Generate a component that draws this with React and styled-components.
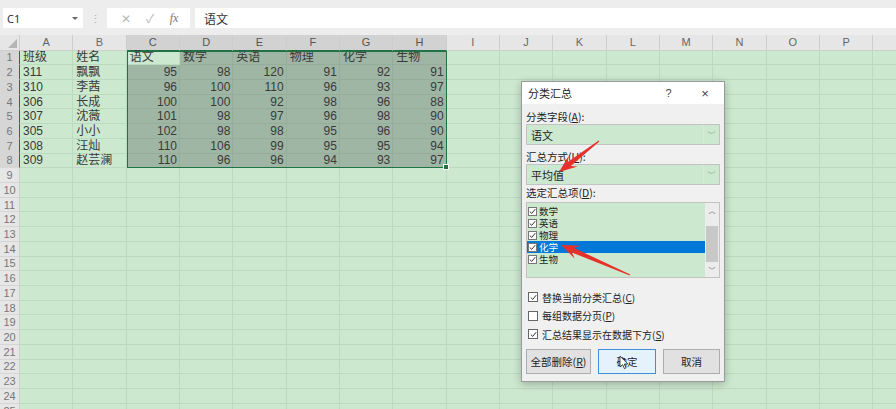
import React from "react";
import styled, { createGlobalStyle } from "styled-components";

const Global = createGlobalStyle`
  html, body { margin: 0; padding: 0; background: #cce8cf; overflow: hidden; }
  body { font-family: "Noto Sans", "Noto Sans CJK SC", sans-serif; }
`;

const Page = styled.div`
  position: relative;
  width: 896px;
  height: 409px;
  overflow: hidden;
  display: flex;
  flex-direction: column;
`;

const TopBar = styled.div`
  height: 35px;
  flex: none;
  background: #ededed;
  display: flex;
  align-items: flex-start;
  padding-top: 8px;
  box-sizing: border-box;
`;

const NameBox = styled.div`
  margin-left: 3px;
  width: 80px;
  height: 20px;
  background: #fff;
  display: flex;
  align-items: center;
  justify-content: space-between;
  padding: 0 5px 0 4px;
  box-sizing: border-box;
  font-size: 11px;
  color: #333;
`;

const Caret = styled.span`
  width: 0; height: 0;
  border-left: 3px solid transparent;
  border-right: 3px solid transparent;
  border-top: 3px solid #666;
`;

const Dots = styled.div`
  width: 24px;
  height: 20px;
  display: flex;
  align-items: center;
  justify-content: center;
  color: #aaa;
  font-size: 11px;
`;

const FxBox = styled.div`
  width: 83px;
  height: 20px;
  background: #fff;
  display: flex;
  align-items: center;
  justify-content: space-around;
  color: #b8b8b8;
  font-size: 12px;
  padding: 0 4px 0 6px;
  box-sizing: border-box;
`;

const Fx = styled.span`
  font-family: "Liberation Serif", serif;
  font-style: italic;
  color: #777;
  font-size: 12px;
`;

const Formula = styled.div`
  margin-left: 5px;
  flex: 1;
  height: 20px;
  background: #fff;
  display: flex;
  align-items: center;
  padding-left: 9px;
  font-size: 12px;
  color: #333;
  font-family: "Noto Sans CJK SC", sans-serif;
`;

const Sheet = styled.div`
  display: grid;
  grid-template-columns: 20px repeat(17, 53.33px);
  grid-template-rows: 15.5px repeat(25, 14.73px);
  background: #cce8cf;
`;

const Corner = styled.div`
  grid-row: 1;
  grid-column: 1;
  background: #e6e6e6;
  border-right: 1px solid #cfcfcf;
  border-bottom: 1px solid #cfcfcf;
  position: relative;
  &::after {
    content: "";
    position: absolute;
    right: 2px;
    bottom: 2px;
    border-left: 9px solid transparent;
    border-bottom: 9px solid #b5b5b5;
  }
`;

const ColHead = styled.div`
  grid-row: 1;
  grid-column: ${p => p.$c + 2};
  background: ${p => (p.$hl ? "#d2d2d2" : "#e6e6e6")};
  border-right: 1px solid #cdcdcd;
  border-bottom: ${p => (p.$hl ? "1.5px solid #217346" : "1px solid #cfcfcf")};
  color: ${p => (p.$hl ? "#555" : "#666")};
  font-size: 11px;
  display: flex;
  align-items: center;
  justify-content: center;
  box-sizing: border-box;
  font-family: "Liberation Sans", sans-serif;
`;

const RowHead = styled.div`
  grid-row: ${p => p.$r + 1};
  grid-column: 1;
  background: ${p => (p.$hl ? "#d6d6d6" : "#e6e6e6")};
  border-right: ${p => (p.$hl ? "1.5px solid #217346" : "1px solid #cfcfcf")};
  border-bottom: 1px solid #d6d6d6;
  color: #777;
  font-size: 11px;
  display: flex;
  align-items: center;
  justify-content: center;
  box-sizing: border-box;
  font-family: "Liberation Sans", sans-serif;
`;

const Cell = styled.div`
  grid-row: ${p => p.$r + 1};
  grid-column: ${p => p.$c + 2};
  background: ${p => (p.$sel ? "#9fb6a4" : "transparent")};
  border-right: 1px solid ${p => (p.$sel ? "#97ad9c" : "#bcdac0")};
  border-bottom: 1px solid ${p => (p.$sel ? "#97ad9c" : "#bcdac0")};
  box-sizing: border-box;
  font-size: 12px;
  color: #3a3a3a;
  display: flex;
  align-items: center;
  justify-content: ${p => (p.$num ? "flex-end" : "flex-start")};
  padding: 0 2px 0 3px;
  white-space: nowrap;
  font-family: "Liberation Sans", "Noto Sans CJK SC", sans-serif;
  line-height: 1;
`;

const SelFrame = styled.div`
  grid-column: 4 / 10;
  grid-row: 2 / 10;
  border: 1.5px solid #217346;
  box-sizing: border-box;
  pointer-events: none;
  position: relative;
  &::after {
    content: "";
    position: absolute;
    right: -3px;
    bottom: -3px;
    width: 4px;
    height: 4px;
    background: #217346;
    border: 1px solid #fff;
  }
`;

const Dialog = styled.div`
  position: absolute;
  left: 521px;
  top: 81px;
  width: 204px;
  height: 301px;
  background: #f0f0f0;
  border: 1px solid #9a9a9a;
  box-shadow: 0 2px 8px rgba(0,0,0,0.25);
  box-sizing: border-box;
  display: flex;
  flex-direction: column;
  font-family: "Noto Sans CJK SC", sans-serif;
  font-size: 10.5px;
  color: #222;
`;

const TitleBar = styled.div`
  height: 22px;
  background: #fff;
  display: flex;
  align-items: center;
  padding: 0 1px 0 6px;
  font-size: 11px;
`;

const TitleText = styled.span`
  flex: 1;
`;

const TitleBtn = styled.span`
  width: ${p => p.$w}px;
  text-align: center;
  color: #444;
  font-family: "Liberation Sans", sans-serif;
  font-size: ${p => p.$fs}px;
`;

const Body = styled.div`
  padding: 6px 4px 0 4px;
  display: flex;
  flex-direction: column;
`;

const Label = styled.div`
  height: 14px;
  line-height: 14px;
  margin-top: ${p => p.$mt || 0}px;
  white-space: nowrap;
`;

const Select = styled.div`
  height: 21px;
  background: #cce8cf;
  border: 1px solid #c3c3c3;
  box-sizing: border-box;
  display: flex;
  align-items: center;
  font-size: 11px;
`;

const SelectText = styled.span`
  flex: 1;
  padding-left: 4px;
`;

const SelectArrow = styled.span`
  width: 15px;
  height: 100%;
  border-left: 1px solid #d8e8da;
  display: flex;
  align-items: center;
  justify-content: center;
  color: #999;
  font-size: 8px;
`;

const List = styled.div`
  margin-top: 2px;
  height: 76px;
  border: 1px solid #c3c3c3;
  background: #cce8cf;
  box-sizing: border-box;
  display: flex;
`;

const Items = styled.div`
  flex: 1;
  padding-top: 2px;
  display: flex;
  flex-direction: column;
`;

const Item = styled.div`
  height: 12px;
  line-height: 11px;
  display: flex;
  align-items: center;
  gap: 2px;
  padding-left: 1px;
  background: ${p => (p.$sel ? "#0078d7" : "transparent")};
  color: ${p => (p.$sel ? "#fff" : "#222")};
  font-size: 9.5px;
`;

const Box = styled.span`
  width: 9px;
  height: 9px;
  border: 1px solid #777;
  background: #fff;
  box-sizing: border-box;
  display: inline-flex;
  align-items: center;
  justify-content: center;
  flex: none;
`;

const Scroll = styled.div`
  width: 14px;
  background: #ececec;
  display: flex;
  flex-direction: column;
  align-items: center;
  justify-content: space-between;
  color: #666;
  font-size: 7px;
  padding: 2px 0;
  box-sizing: border-box;
  position: relative;
`;

const Thumb = styled.div`
  position: absolute;
  left: 1px;
  right: 1px;
  top: 23px;
  height: 36px;
  background: #c8c8c8;
`;

const Opts = styled.div`
  margin-top: 12.5px;
  display: flex;
  flex-direction: column;
  gap: 5.5px;
`;

const Opt = styled.div`
  height: 13px;
  display: flex;
  align-items: center;
  gap: 4px;
  padding-left: 2px;
  font-size: 10px;
  white-space: nowrap;
`;

const OptBox = styled(Box)`
  width: 10px;
  height: 10px;
  border-color: #666;
`;

const Buttons = styled.div`
  margin-top: 8.5px;
  display: flex;
  justify-content: space-between;
`;

const Btn = styled.div`
  width: ${p => p.$w}px;
  height: 25px;
  box-sizing: border-box;
  border: 1px solid ${p => (p.$primary ? "#3c8fdb" : "#adadad")};
  background: ${p => (p.$primary ? "#e5f1fb" : "#e1e1e1")};
  display: flex;
  align-items: center;
  justify-content: center;
  font-size: 10.5px;
  color: #222;
  white-space: nowrap;
`;

const Arrows = styled.svg`
  position: absolute;
  left: 0;
  top: 0;
  pointer-events: none;
`;

const Check = () => (
  <svg width="7" height="7" viewBox="0 0 7 7">
    <path d="M0.8 3.6 L2.7 5.4 L6.2 1.2" fill="none" stroke="#333" strokeWidth="1" />
  </svg>
);

function arrowPoints(tx, ty, px, py, headLen = 18, headW = 14, tailW = 1, neckW = 5) {
  const dx = px - tx, dy = py - ty;
  const L = Math.hypot(dx, dy);
  const ux = dx / L, uy = dy / L;
  const nx = -uy, ny = ux;
  const bx = px - ux * headLen, by = py - uy * headLen;
  const nbx = px - ux * (headLen - 5), nby = py - uy * (headLen - 5);
  const pts = [
    [tx + nx * tailW / 2, ty + ny * tailW / 2],
    [nbx + nx * neckW / 2, nby + ny * neckW / 2],
    [bx + nx * headW / 2, by + ny * headW / 2],
    [px, py],
    [bx - nx * headW / 2, by - ny * headW / 2],
    [nbx - nx * neckW / 2, nby - ny * neckW / 2],
    [tx - nx * tailW / 2, ty - ny * tailW / 2],
  ];
  return pts.map(p => p.map(v => v.toFixed(1)).join(",")).join(" ");
}

const cols = ["A", "B", "C", "D", "E", "F", "G", "H", "I", "J", "K", "L", "M", "N", "O", "P", ""];
const data = [
  ["班级", "姓名", "语文", "数学", "英语", "物理", "化学", "生物"],
  ["311", "飘飘", 95, 98, 120, 91, 92, 91],
  ["310", "李茜", 96, 100, 110, 96, 93, 97],
  ["306", "长成", 100, 100, 92, 98, 96, 88],
  ["307", "沈薇", 101, 98, 97, 96, 98, 90],
  ["305", "小小", 102, 98, 98, 95, 96, 90],
  ["308", "汪灿", 110, 106, 99, 95, 95, 94],
  ["309", "赵芸澜", 110, 96, 96, 94, 93, 97],
];

export default function App() {
  const cells = [];
  for (let r = 1; r <= 25; r++) {
    const hl = r <= 8;
    cells.push(<RowHead key={"rh" + r} $r={r} $hl={hl}>{r}</RowHead>);
    cols.forEach((c, ci) => {
      const v = data[r - 1] ? data[r - 1][ci] : undefined;
      const sel = r <= 8 && ci >= 2 && ci <= 7 && !(r === 1 && ci === 2);
      const num = typeof v === "number";
      cells.push(
        <Cell key={ci + "-" + r} $r={r} $c={ci} $sel={sel} $num={num}>
          {v !== undefined ? v : ""}
        </Cell>
      );
    });
  }

  return (
    <Page>
      <Global />
      <TopBar>
        <NameBox>
          <span>C1</span>
          <Caret />
        </NameBox>
        <Dots>⋮</Dots>
        <FxBox>
          <span>✕</span>
          <span>✓</span>
          <Fx>fx</Fx>
        </FxBox>
        <Formula>语文</Formula>
      </TopBar>
      <Sheet>
        <Corner />
        {cols.map((c, i) => (
          <ColHead key={"ch" + i} $c={i} $hl={i >= 2 && i <= 7}>{c}</ColHead>
        ))}
        {cells}
        <SelFrame />
      </Sheet>

      <Dialog>
        <TitleBar>
          <TitleText>分类汇总</TitleText>
          <TitleBtn $w={37} $fs={11}>?</TitleBtn>
          <TitleBtn $w={36} $fs={13}>×</TitleBtn>
        </TitleBar>
        <Body>
          <Label>分类字段(<u>A</u>):</Label>
          <Select>
            <SelectText>语文</SelectText>
            <SelectArrow>﹀</SelectArrow>
          </Select>
          <Label $mt={5}>汇总方式(<u>U</u>):</Label>
          <Select>
            <SelectText>平均值</SelectText>
            <SelectArrow>﹀</SelectArrow>
          </Select>
          <Label $mt={1}>选定汇总项(<u>D</u>):</Label>
          <List>
            <Items>
              {["数学", "英语", "物理", "化学", "生物"].map(n => (
                <Item key={n} $sel={n === "化学"}>
                  <Box><Check /></Box>
                  <span>{n}</span>
                </Item>
              ))}
            </Items>
            <Scroll>
              <span>︿</span>
              <Thumb />
              <span>﹀</span>
            </Scroll>
          </List>
          <Opts>
            <Opt><OptBox><Check /></OptBox><span>替换当前分类汇总(<u>C</u>)</span></Opt>
            <Opt><OptBox /><span>每组数据分页(<u>P</u>)</span></Opt>
            <Opt><OptBox><Check /></OptBox><span>汇总结果显示在数据下方(<u>S</u>)</span></Opt>
          </Opts>
          <Buttons>
            <Btn $w={65}><span>全部删除(<u>R</u>)</span></Btn>
            <Btn $w={58} $primary>确定</Btn>
            <Btn $w={57}>取消</Btn>
          </Buttons>
        </Body>
      </Dialog>

      <Arrows width="896" height="409" viewBox="0 0 896 409">
        <polygon points={arrowPoints(599, 141, 559, 172)} fill="#e8302a" />
        <polygon points={arrowPoints(630, 275, 561, 245)} fill="#e8302a" />
        <path d="M620 356 L620 367 L622.6 364.6 L624.4 368.6 L626 367.9 L624.3 364 L627.8 364 Z" fill="#fff" stroke="#222" strokeWidth="0.8" />
      </Arrows>
    </Page>
  );
}
